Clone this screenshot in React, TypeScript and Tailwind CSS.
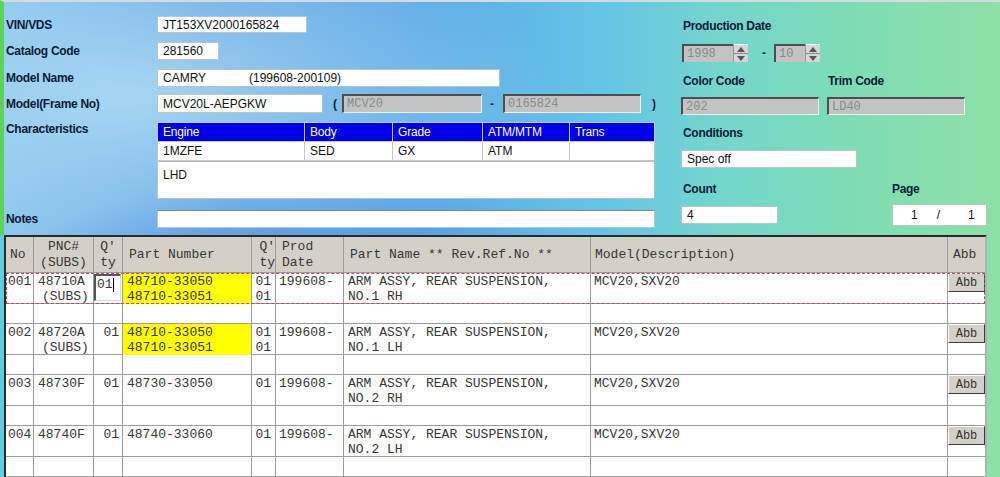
import React from "react";

const sans = "font-['Liberation_Sans',Arial,sans-serif]";
const mono = "font-['Liberation_Mono','Courier_New',monospace]";

function Label({ children, className = "" }: { children: React.ReactNode; className?: string }) {
  return (
    <div className={`${sans} text-[12px] font-bold leading-[14px] text-[#0c1a36] tracking-[-0.3px] whitespace-nowrap ${className}`}>
      {children}
    </div>
  );
}

const whiteBox = `bg-white border border-[#b9c3c9] ${sans} text-[12px] text-[#111] px-[5px] flex items-center whitespace-nowrap`;
const greyBox = `bg-[#c3c3c3] border-t-2 border-l-2 border-b border-r border-t-[#4e4e4e] border-l-[#4e4e4e] border-b-[#eeeeee] border-r-[#eeeeee] ${mono} text-[12px] text-[#8a8a8a] pl-[3px] flex items-center whitespace-nowrap`;

function Spinner({ value, width }: { value: string; width: string }) {
  return (
    <div className={`flex h-[18px] bg-white ${width}`}>
      <div className={`flex-1 ${greyBox} border-b-0 border-r-0`}>{value}</div>
      <div className="w-[15px] flex flex-col border-l border-[#9a9a9a] bg-[#d6d6d6]">
        <div className="flex-1 flex items-center justify-center border-b border-[#8a8a8a] border-t border-t-white">
          <svg width="8" height="5" viewBox="0 0 8 5"><path d="M0 5 L4 0 L8 5 Z" fill="#555" /></svg>
        </div>
        <div className="flex-1 flex items-center justify-center">
          <svg width="8" height="5" viewBox="0 0 8 5"><path d="M0 0 L8 0 L4 5 Z" fill="#555" /></svg>
        </div>
      </div>
    </div>
  );
}

const cols = "grid grid-cols-[28px_60px_29px_129px_24px_68px_247px_357px_37px]";
const cell = "border-r border-[#9c9c9c]";
const txt = `${mono} text-[13px] leading-[15px] text-[#363636] whitespace-pre`;

type Row = {
  no: string;
  pnc: string[];
  qty: string;
  pn: string[];
  yellow: boolean;
  qty2: string[];
  date: string;
  name: string[];
  model: string;
  input?: boolean;
};

const rows: Row[] = [
  { no: "001", pnc: ["48710A", "(SUBS)"], qty: "01", pn: ["48710-33050", "48710-33051"], yellow: true, qty2: ["01", "01"], date: "199608-", name: ["ARM ASSY, REAR SUSPENSION,", "NO.1 RH"], model: "MCV20,SXV20", input: true },
  { no: "002", pnc: ["48720A", "(SUBS)"], qty: "01", pn: ["48710-33050", "48710-33051"], yellow: true, qty2: ["01", "01"], date: "199608-", name: ["ARM ASSY, REAR SUSPENSION,", "NO.1 LH"], model: "MCV20,SXV20" },
  { no: "003", pnc: ["48730F"], qty: "01", pn: ["48730-33050"], yellow: false, qty2: ["01"], date: "199608-", name: ["ARM ASSY, REAR SUSPENSION,", "NO.2 RH"], model: "MCV20,SXV20" },
  { no: "004", pnc: ["48740F"], qty: "01", pn: ["48740-33060"], yellow: false, qty2: ["01"], date: "199608-", name: ["ARM ASSY, REAR SUSPENSION,", "NO.2 LH"], model: "MCV20,SXV20" },
];

function DataRow({ r }: { r: Row }) {
  return (
    <div
      className={`${cols} h-[31px] border-b border-[#9c9c9c] bg-white ${
        r.input ? "outline outline-1 outline-dashed outline-[#b24c6c] outline-offset-[-1px]" : ""
      }`}
    >
      <div className={`${cell} ${txt} pl-[2px] pt-[1px]`}>{r.no}</div>
      <div className={`${cell} ${txt} pl-[4px] pt-[1px]`}>
        <div>{r.pnc[0]}</div>
        {r.pnc[1] && <div className="pl-[4px]">{r.pnc[1]}</div>}
      </div>
      <div className={`${cell} ${txt}`}>
        {r.input ? (
          <div className="mt-[1px] w-[27px] h-[27px] bg-white border-t-2 border-l-2 border-t-[#555] border-l-[#555] border-r border-b border-r-[#d8d8d8] border-b-[#d8d8d8] flex items-start pt-[1px] pl-[1px]">
            <span>{r.qty}</span>
            <span className="w-px h-[14px] bg-black mt-[1px]" />
          </div>
        ) : (
          <div className="text-right pr-[3px] pt-[1px]">{r.qty}</div>
        )}
      </div>
      <div className={`${cell} ${txt} pl-[4px] pt-[1px] ${r.yellow ? "bg-[#ffff00]" : ""}`}>
        {r.pn.map((p, i) => (
          <div key={i}>{p}</div>
        ))}
      </div>
      <div className={`${cell} ${txt} text-right pr-[4px] pt-[1px]`}>
        {r.qty2.map((p, i) => (
          <div key={i}>{p}</div>
        ))}
      </div>
      <div className={`${cell} ${txt} pl-[3px] pt-[1px]`}>{r.date}</div>
      <div className={`${cell} ${txt} pl-[4px] pt-[1px]`}>
        {r.name.map((p, i) => (
          <div key={i}>{p}</div>
        ))}
      </div>
      <div className={`${cell} ${txt} pl-[3px] pt-[1px]`}>{r.model}</div>
      <div>
        <div className={`h-[19px] w-full bg-[#d4d0c8] border border-t-white border-l-white border-r-[#3c3c3c] border-b-[#3c3c3c] ${mono} text-[12px] text-[#333] flex items-center justify-center`}>
          Abb
        </div>
      </div>
    </div>
  );
}

function SpacerRow() {
  return (
    <div className={`${cols} h-[20px] border-b border-[#9c9c9c] bg-white`}>
      {Array.from({ length: 8 }).map((_, i) => (
        <div key={i} className={cell} />
      ))}
      <div />
    </div>
  );
}

export default function App() {
  return (
    <div className="w-[1000px] h-[477px] overflow-hidden bg-[image:radial-gradient(ellipse_at_30%_85%,#3f82dc_0%,transparent_40%),radial-gradient(ellipse_at_12%_20%,#a6d6f2_0%,transparent_35%),linear-gradient(90deg,#88c4ec_0%,#5d9fe4_22%,#5aa9e7_42%,#64c4e6_60%,#73d6cd_72%,#7edcb4_85%,#8de0a6_100%)]">
      {/* Top form */}
      <div className="flex h-[235px] border-t-2 border-l-4 border-t-[#d3dbde] border-l-[#5bd35b]">
        {/* Left column */}
        <div className="w-[677px] pl-[2px] flex flex-col">
          <div className="flex items-center mt-[14px] h-[17px]">
            <Label className="w-[151px]">VIN/VDS</Label>
            <div className={`${whiteBox} w-[150px] h-[17px]`}>JT153XV2000165824</div>
          </div>
          <div className="flex items-center mt-[9px] h-[18px]">
            <Label className="w-[151px]">Catalog Code</Label>
            <div className={`${whiteBox} w-[62px] h-[18px]`}>281560</div>
          </div>
          <div className="flex items-center mt-[9px] h-[18px]">
            <Label className="w-[151px]">Model Name</Label>
            <div className={`${whiteBox} w-[343px] h-[18px]`}>
              <span className="inline-block w-[86px]">CAMRY</span>
              <span>(199608-200109)</span>
            </div>
          </div>
          <div className="flex items-center mt-[7px] h-[19px]">
            <Label className="w-[151px]">Model(Frame No)</Label>
            <div className={`${whiteBox} w-[166px] h-[19px]`}>MCV20L-AEPGKW</div>
            <Label className="ml-[10px] w-[9px]">(</Label>
            <div className={`${greyBox} w-[140px] h-[19px]`}>MCV20</div>
            <Label className="ml-[8px] w-[13px]">-</Label>
            <div className={`${greyBox} w-[138px] h-[19px]`}>0165824</div>
            <Label className="ml-[11px]">)</Label>
          </div>
          <div className="flex items-start mt-[9px]">
            <Label className="w-[151px]">Characteristics</Label>
            <div className="w-[498px] flex flex-col">
              <div className={`grid grid-cols-[146px_87px_89px_86px_84px] gap-px bg-[#c6c6c6] border border-[#c6c6c6] ${sans} text-[12px]`}>
                {["Engine", "Body", "Grade", "ATM/MTM", "Trans"].map((h) => (
                  <div key={h} className="h-[18px] bg-[#0000e6] text-white pl-[5px] flex items-center tracking-[-0.2px]">
                    {h}
                  </div>
                ))}
                {["1MZFE", "SED", "GX", "ATM", ""].map((h, i) => (
                  <div key={i} className="h-[18px] bg-white text-[#111] pl-[5px] flex items-center">
                    {h}
                  </div>
                ))}
              </div>
              <div className={`h-[38px] bg-white border border-[#c0c0c0] ${sans} text-[12px] text-[#111] pl-[5px] pt-[4px]`}>
                LHD
              </div>
            </div>
          </div>
          <div className="flex items-center mt-[11px] h-[18px]">
            <Label className="w-[151px]">Notes</Label>
            <div className={`${whiteBox} w-[498px] h-[18px] border-t-[#7a8a94]`} />
          </div>
        </div>

        {/* Right column */}
        <div className="flex flex-col">
          <Label className="mt-[17px] pl-[2px]">Production Date</Label>
          <div className="mt-[11px] flex items-center h-[18px] pl-[1px]">
            <Spinner value="1998" width="w-[66px]" />
            <Label className="ml-[14px] w-[12px]">-</Label>
            <Spinner value="10" width="w-[46px]" />
          </div>
          <div className="mt-[12px] flex">
            <Label className="w-[147px] pl-[2px]">Color Code</Label>
            <Label>Trim Code</Label>
          </div>
          <div className="mt-[9px] flex gap-[8px]">
            <div className={`${greyBox} w-[138px] h-[18px]`}>202</div>
            <div className={`${greyBox} w-[138px] h-[18px]`}>LD40</div>
          </div>
          <Label className="mt-[11px] pl-[2px]">Conditions</Label>
          <div className={`${whiteBox} mt-[10px] w-[176px] h-[18px]`}>Spec off</div>
          <div className="mt-[14px] flex">
            <Label className="w-[211px] pl-[2px]">Count</Label>
            <Label>Page</Label>
          </div>
          <div className="mt-[8px] flex items-center h-[22px]">
            <div className={`${whiteBox} w-[97px] h-[18px]`}>4</div>
            <div className={`${whiteBox} ml-[114px] w-[95px] h-[22px] px-0 pl-[18px]`}>
              <span>1</span>
              <span className="ml-[19px]">/</span>
              <span className="ml-[28px]">1</span>
            </div>
          </div>
        </div>
      </div>

      {/* Table */}
      <div className="flex h-[242px]">
        <div className="w-[4px] bg-[#62cde0]" />
        <div className="w-[983px] border-t-2 border-l-2 border-r-2 border-t-[#2a2a2a] border-l-[#2a2a2a] border-r-[#a9b4b4] flex flex-col">
          <div className={`${cols} h-[36px] bg-[#d4d0c8] border-b border-[#9c9c9c] ${mono} text-[13px] leading-[16px] text-[#363636]`}>
            <div className={`${cell} flex items-center pl-[4px]`}>No</div>
            <div className={`${cell} flex flex-col justify-center items-center`}>
              <div>PNC#</div>
              <div>(SUBS)</div>
            </div>
            <div className={`${cell} flex flex-col justify-center items-center`}>
              <div>Q'</div>
              <div>ty</div>
            </div>
            <div className={`${cell} flex items-center pl-[6px]`}>Part Number</div>
            <div className={`${cell} flex flex-col justify-center items-end`}>
              <div>Q'</div>
              <div>ty</div>
            </div>
            <div className={`${cell} flex flex-col justify-center pl-[6px]`}>
              <div>Prod</div>
              <div>Date</div>
            </div>
            <div className={`${cell} flex items-center pl-[6px] whitespace-pre`}>Part Name ** Rev.Ref.No **</div>
            <div className={`${cell} flex items-center pl-[4px]`}>Model(Description)</div>
            <div className="flex items-center pl-[5px]">Abb</div>
          </div>
          {rows.map((r) => (
            <React.Fragment key={r.no}>
              <DataRow r={r} />
              <SpacerRow />
            </React.Fragment>
          ))}
        </div>
      </div>
    </div>
  );
}
